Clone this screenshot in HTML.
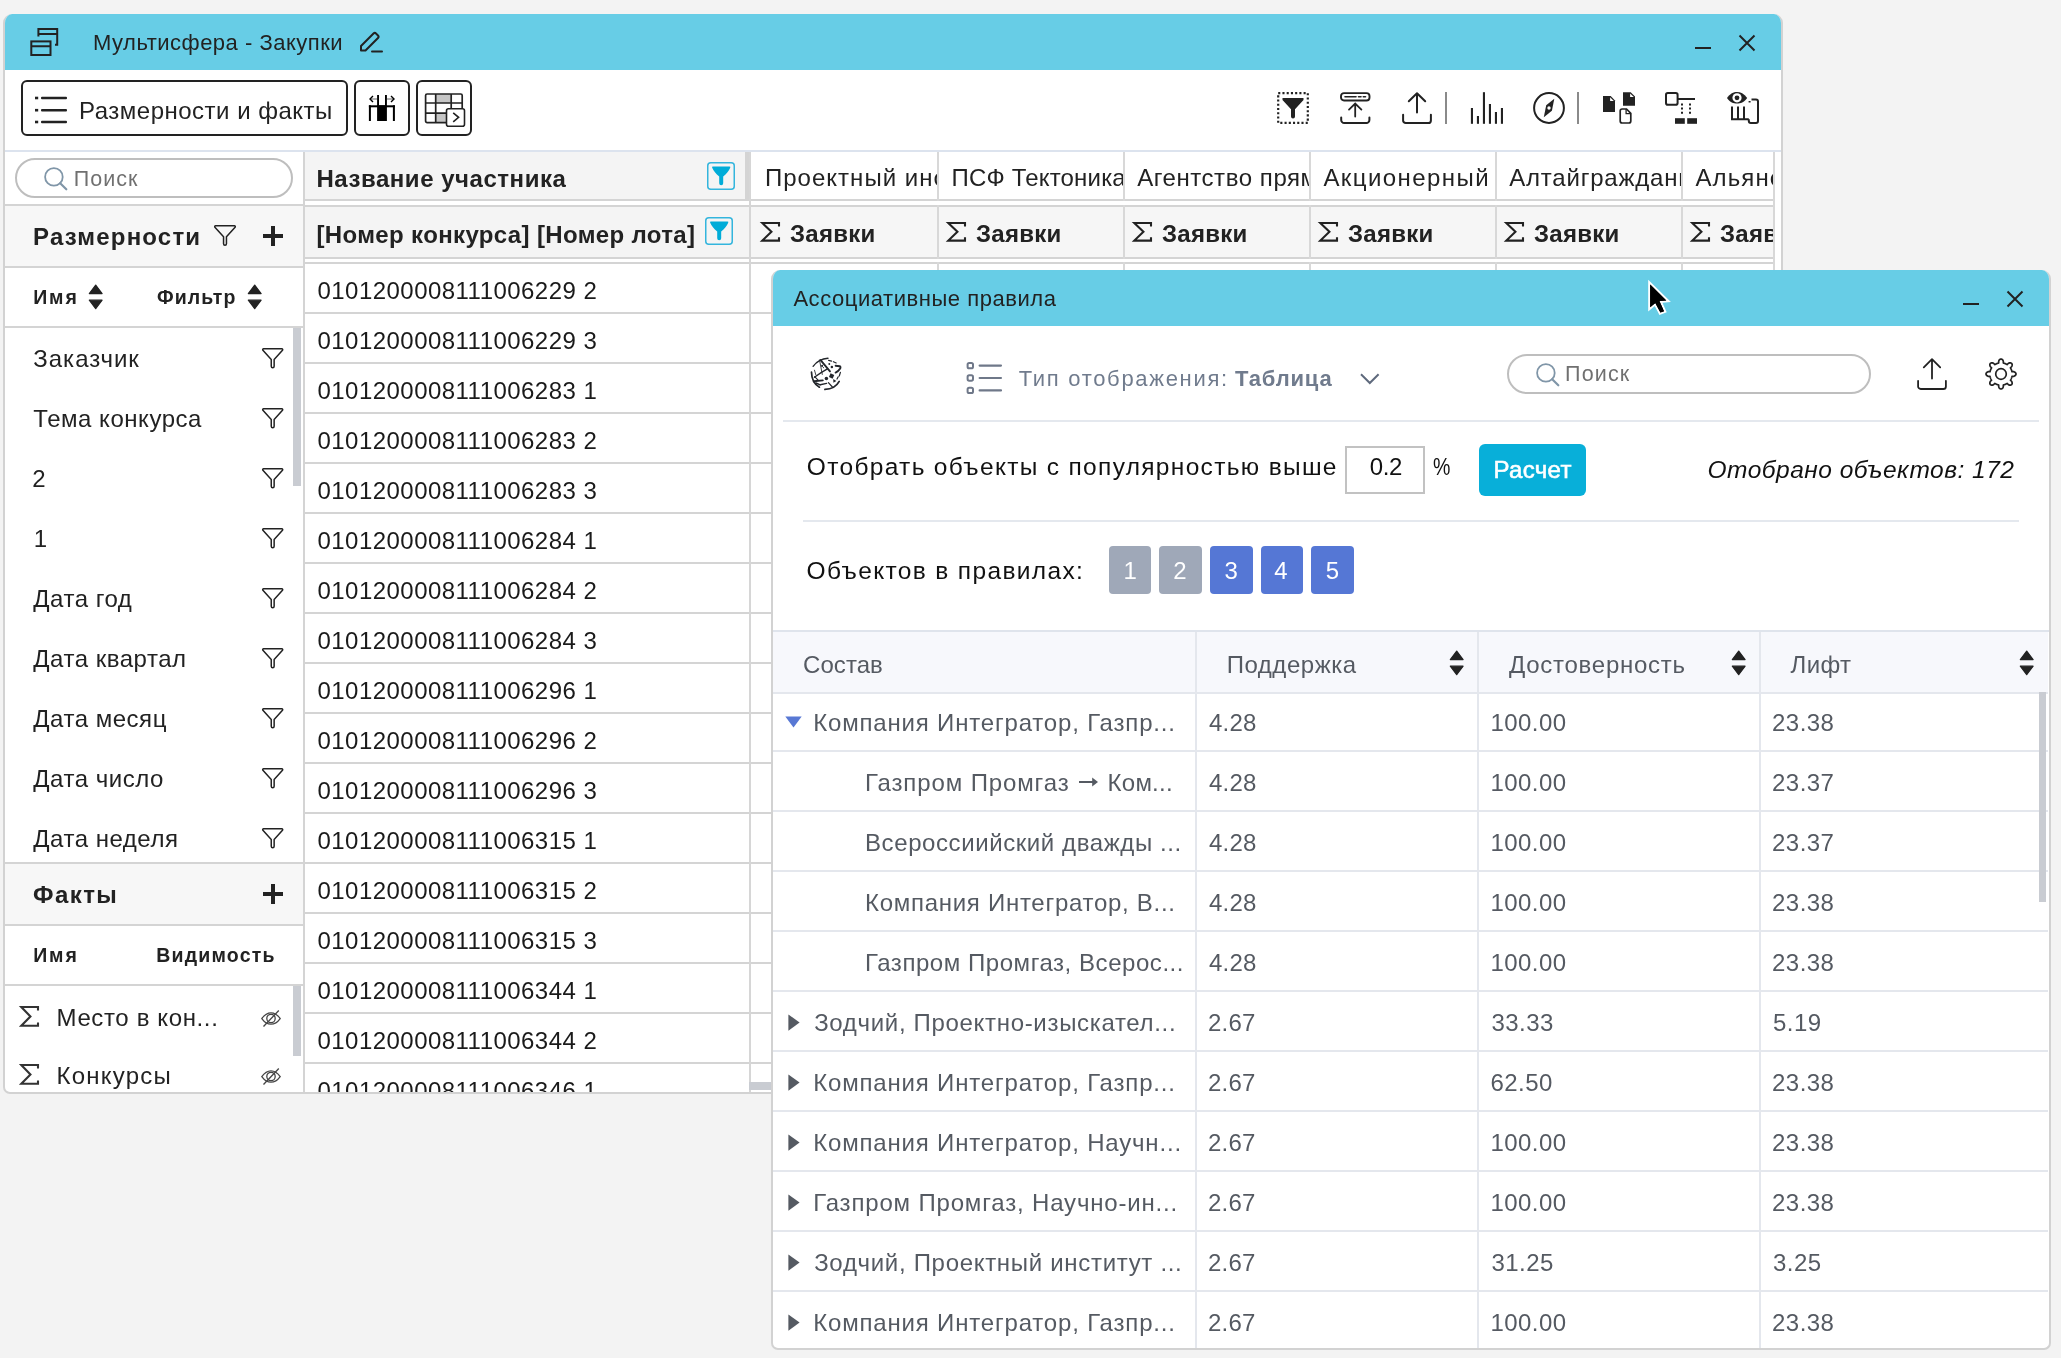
<!DOCTYPE html>
<html lang="ru"><head><meta charset="utf-8"><title>Мультисфера - Закупки</title>
<style>
html,body{margin:0;padding:0}
body{width:2061px;height:1358px;overflow:hidden;background:#f3f3f3;position:relative;font-family:"Liberation Sans", sans-serif;}
body div,body svg,body span.t{position:absolute;box-sizing:border-box}
span.t{white-space:nowrap;line-height:1;display:block}
svg{overflow:visible}
</style></head><body>
<div id="root" style="left:0;top:0;width:2061px;height:1358px;will-change:transform;overflow:hidden;background:#f3f3f3">
<div style="left:3px;top:14px;width:1780px;height:1080px;border:2px solid #d2d2d2;border-top:0;border-radius:9px 9px 7px 7px;overflow:hidden;background:#fff"><div style="left:-5px;top:-14px;width:0;height:0">
<div style="left:5px;top:14px;width:1776px;height:56px;background:#67cde6"></div>
<svg style="left:30px;top:27px;" width="29" height="30" viewBox="0 0 29 30"><g fill="none" stroke="#222" stroke-width="2"><path d="M8.4 9.5V1.9H27.2V17.8H25"/><path d="M8.4 7H27.2"/><rect x="1.3" y="14.4" width="19.2" height="13.6"/><path d="M1.3 19.2H20.5"/></g></svg>
<span class="t" style="left:93px;top:32.18px;font-size:22px;color:#222;letter-spacing:0.5px;">Мультисфера - Закупки</span>
<svg style="left:359px;top:31px;" width="24" height="22" viewBox="0 0 24 22"><g fill="none" stroke="#222" stroke-width="2" stroke-linejoin="round" stroke-linecap="round"><path d="M2 19.5V15L14.5 2.5a1.8 1.8 0 0 1 2.5 0l2 2a1.8 1.8 0 0 1 0 2.5L6.5 19.5Z"/><path d="M13 20.5H23"/></g></svg>
<div style="left:1695px;top:47px;width:16px;height:2px;background:#222"></div>
<svg style="left:1739px;top:34.5px;" width="16" height="16" viewBox="0 0 16 16"><path d="M0.5 0.5L15.5 15.5M15.5 0.5L0.5 15.5" stroke="#222" stroke-width="2" fill="none"/></svg>
<div style="left:21px;top:80px;width:327px;height:56px;border:2px solid #222;border-radius:6px"></div>
<svg style="left:35px;top:96px;" width="32" height="28" viewBox="0 0 32 28"><rect x="0" y="0.7" width="3.2" height="2.6" fill="#222"/><rect x="6" y="0.7" width="26" height="2.6" rx="1" fill="#222"/><rect x="0" y="12.899999999999999" width="3.2" height="2.6" fill="#222"/><rect x="6" y="12.899999999999999" width="26" height="2.6" rx="1" fill="#222"/><rect x="0" y="24.7" width="3.2" height="2.6" fill="#222"/><rect x="6" y="24.7" width="26" height="2.6" rx="1" fill="#222"/></svg>
<span class="t" style="left:79px;top:98.68px;font-size:24px;color:#222;letter-spacing:0.5px;">Размерности и факты</span>
<div style="left:354px;top:80px;width:56px;height:56px;border:2px solid #222;border-radius:6px"></div>
<svg style="left:368px;top:94px;" width="28" height="28" viewBox="0 0 28 28"><g fill="#000"><rect x="0.9" y="11.3" width="26" height="2"/><rect x="0.9" y="11.3" width="2" height="15.7"/><rect x="24.9" y="11.3" width="2" height="15.7"/><rect x="9.1" y="11.3" width="9.8" height="15.7"/><rect x="9.1" y="1" width="1.9" height="11"/><rect x="17" y="1" width="1.9" height="11"/></g><path d="M9 5H2.5" stroke="#999" stroke-width="1.6"/><path d="M19 5H25.5" stroke="#999" stroke-width="1.6"/><path d="M5 2L2 5L5 8M23 2L26 5L23 8" stroke="#000" stroke-width="1.4" fill="none"/></svg>
<div style="left:416px;top:80px;width:56px;height:56px;border:2px solid #222;border-radius:6px"></div>
<svg style="left:424px;top:93px;" width="42" height="34" viewBox="0 0 42 34"><rect x="11.7" y="1" width="15.5" height="9" fill="#c6c6c6"/><rect x="11.7" y="20.5" width="15.5" height="8.6" fill="#c6c6c6"/><g fill="none" stroke="#222" stroke-width="1.7"><rect x="1.6" y="1" width="36.6" height="28.6" rx="1.5"/><path d="M1.6 10H38.2M1.6 20.2H38.2M11.7 1V29.6M27.2 1V29.6"/></g><rect x="22.5" y="15.8" width="18" height="17.5" rx="2" fill="#fff" stroke="#222" stroke-width="1.6"/><path d="M29.2 19.8L34.6 24.3L29.2 28.8" fill="none" stroke="#222" stroke-width="1.6"/></svg>
<svg style="left:1277px;top:92px;" width="32" height="32" viewBox="0 0 32 32"><rect x="1.2" y="1.2" width="29.6" height="29.6" fill="none" stroke="#222" stroke-width="2.2" stroke-dasharray="2.1 2.13"/><path d="M5.5 6H26.5V8L18 17.2V24.6a2 2 0 0 1-4 0V17.2L5.5 8Z" fill="#222"/></svg>
<svg style="left:1340px;top:92px;" width="31" height="32" viewBox="0 0 31 32"><g fill="none" stroke="#222" stroke-linecap="round"><rect x="1" y="1.1" width="28.5" height="7.4" rx="3" stroke-width="1.9"/><path d="M5 4.8H16" stroke-width="1.6"/><path d="M18.5 4.8H21M23.3 4.8H25.5" stroke-width="1.6"/><path d="M15.2 12V24.5M9 17.6L15.2 11.6L21.4 17.6" stroke-width="1.8"/><path d="M1.2 25.5V28a3 3 0 0 0 3 3H26.4a3 3 0 0 0 3-3V25.5" stroke-width="2"/></g></svg>
<svg style="left:1402px;top:92px;" width="30" height="32" viewBox="0 0 30 32"><g fill="none" stroke="#222" stroke-width="2" stroke-linecap="round" stroke-linejoin="round"><path d="M15.0 1.2V20.5M6.800000000000001 9.3L15.0 1.2L23.2 9.3"/><path d="M1.1 22.8V28.4a2.6 2.6 0 0 0 2.6 2.6H26.3a2.6 2.6 0 0 0 2.6-2.6V22.8"/></g></svg>
<div style="left:1445px;top:92px;width:2px;height:32px;background:#8a8a8a"></div>
<svg style="left:1470px;top:92px;" width="33" height="32" viewBox="0 0 33 32"><rect x="0.9" y="16" width="2.1" height="15.8" fill="#222"/><rect x="6.9" y="24" width="2.1" height="7.800000000000001" fill="#222"/><rect x="12.9" y="0.2" width="2.1" height="31.6" fill="#222"/><rect x="18.9" y="12" width="2.1" height="19.8" fill="#222"/><rect x="24.9" y="20" width="2.1" height="11.8" fill="#222"/><rect x="30.9" y="16" width="2.1" height="15.8" fill="#222"/></svg>
<svg style="left:1533px;top:92px;" width="32" height="32" viewBox="0 0 32 32"><circle cx="16" cy="16" r="14.9" fill="none" stroke="#222" stroke-width="2"/><path d="M21.3 6.8L18.9 18.7L10.8 25.2L13.2 13.3Z" fill="#222"/><circle cx="16" cy="16" r="1.7" fill="#fff"/></svg>
<div style="left:1577px;top:92px;width:2px;height:32px;background:#8a8a8a"></div>
<svg style="left:1603px;top:92px;" width="33" height="33" viewBox="0 0 33 33"><path d="M0 4.1H7.7L12 8.399999999999999V19.9H0Z" fill="#222"/><path d="M7.1000000000000005 5.3V8.999999999999998H10.8" fill="#fff" stroke="none"/><path d="M20 0.2H27.7L32 4.5V13.799999999999999H20Z" fill="#222"/><path d="M27.099999999999998 1.4V5.1H30.8" fill="#fff" stroke="none"/><path d="M19.2 17H23.499999999999996L27.799999999999997 21.3V29a2 2 0 0 1-2 2H19.2a2 2 0 0 1-2-2V19a2 2 0 0 1 2-2Z" fill="#fff" stroke="#222" stroke-width="1.7"/><path d="M23.099999999999998 17V21.7H27.799999999999997" fill="none" stroke="#222" stroke-width="1.3"/></svg>
<svg style="left:1665px;top:92px;" width="33" height="32" viewBox="0 0 33 32"><rect x="1" y="1.1" width="11.6" height="11.6" rx="1.8" fill="none" stroke="#222" stroke-width="2"/><path d="M13 7H30" stroke="#222" stroke-width="2"/><path d="M17 11.4V22M25 11.4V22" stroke="#222" stroke-width="2" stroke-dasharray="2 2.2"/><rect x="10" y="26.2" width="9.8" height="5.6" fill="#222"/><rect x="22.2" y="26.2" width="9.8" height="5.6" fill="#222"/></svg>
<svg style="left:1727px;top:92px;" width="33" height="32" viewBox="0 0 33 32"><path d="M0 6C3 1.6 6.5 0 10 0S17 1.6 20.2 6C17 10.4 13.5 11.6 10 11.6S3 10.4 0 6Z" fill="#222"/><circle cx="10" cy="5.8" r="4.6" fill="#fff"/><circle cx="10" cy="5.8" r="2.4" fill="#222"/><g fill="none" stroke="#222" stroke-width="2"><path d="M5 14.4V27.2H21.8M11 14.4V27.2M17 14.4V27.2"/><path d="M21.8 27.2V29a2 2 0 0 0 2 2H29a2 2 0 0 0 2-2V9.6a2 2 0 0 0-2-2H24.5"/><path d="M22.6 9V11" stroke-dasharray="1.5 1.5"/></g></svg>
<div style="left:5px;top:150px;width:1776px;height:2px;background:#dce3ee"></div>
<div style="left:15px;top:158px;width:278px;height:40px;border:2px solid #bebebe;border-radius:20px"></div>
<svg style="left:44px;top:166.5px;" width="23" height="23" viewBox="0 0 23 23"><circle cx="9.9" cy="9.9" r="8.8" fill="none" stroke="#8096a8" stroke-width="1.8"/><path d="M16.2 16.2L22.3 22.3" stroke="#8096a8" stroke-width="2.2" stroke-linecap="round"/></svg>
<span class="t" style="left:73.8px;top:168.70px;font-size:21.5px;color:#707070;letter-spacing:0.98px;">Поиск</span>
<div style="left:5px;top:204px;width:299px;height:2px;background:#d4d4d4"></div>
<div style="left:5px;top:206px;width:299px;height:60px;background:#f7f7f7"></div>
<span class="t" style="left:33px;top:224.68px;font-size:24px;color:#222;font-weight:700;letter-spacing:1.2px;">Размерности</span>
<svg style="left:213.5px;top:225px;" width="22" height="21" viewBox="0 0 22 21"><path d="M1.6 0.8H20.4a0.9 0.9 0 0 1 .7 1.5L12.45 11.760000000000002V18.8a1.45 1.45 0 0 1-2.9 0V11.760000000000002L0.9 2.3a0.9 0.9 0 0 1 .7-1.5Z" fill="none" stroke="#222" stroke-width="1.5" stroke-linejoin="round"/></svg>
<svg style="left:263px;top:226.1px;" width="20" height="20" viewBox="0 0 20 20"><rect x="0" y="8.0" width="20" height="4" fill="#222"/><rect x="8.0" y="0" width="4" height="20" fill="#222"/></svg>
<div style="left:5px;top:266px;width:299px;height:2px;background:#d4d4d4"></div>
<span class="t" style="left:33.2px;top:288.29px;font-size:19.5px;color:#222;font-weight:700;letter-spacing:1.88px;">Имя</span>
<svg style="left:88px;top:283.9px;" width="16" height="26" viewBox="0 0 16 26"><g fill="#222" stroke="#222" stroke-width="1.2" stroke-linejoin="round"><path d="M1.3 9.6L7.7 1.1L14.1 9.6Z"/><path d="M1.3 16.2L7.7 24.7L14.1 16.2Z"/></g></svg>
<span class="t" style="left:157.0px;top:288.29px;font-size:19.5px;color:#222;font-weight:700;letter-spacing:1.11px;">Фильтр</span>
<svg style="left:247px;top:283.9px;" width="16" height="26" viewBox="0 0 16 26"><g fill="#222" stroke="#222" stroke-width="1.2" stroke-linejoin="round"><path d="M1.3 9.6L7.7 1.1L14.1 9.6Z"/><path d="M1.3 16.2L7.7 24.7L14.1 16.2Z"/></g></svg>
<div style="left:5px;top:326px;width:299px;height:2px;background:#d4d4d4"></div>
<span class="t" style="left:33.3px;top:346.68px;font-size:24px;color:#222;letter-spacing:0.99px;">Заказчик</span>
<svg style="left:262.2px;top:347.6px;" width="21.4" height="20.4" viewBox="0 0 21.4 20.4"><path d="M1.6 0.8H19.799999999999997a0.9 0.9 0 0 1 .7 1.5L12.149999999999999 11.424V18.2a1.45 1.45 0 0 1-2.9 0V11.424L0.9 2.3a0.9 0.9 0 0 1 .7-1.5Z" fill="none" stroke="#222" stroke-width="1.5" stroke-linejoin="round"/></svg>
<span class="t" style="left:33.3px;top:406.68px;font-size:24px;color:#222;letter-spacing:0.53px;">Тема конкурса</span>
<svg style="left:262.2px;top:407.6px;" width="21.4" height="20.4" viewBox="0 0 21.4 20.4"><path d="M1.6 0.8H19.799999999999997a0.9 0.9 0 0 1 .7 1.5L12.149999999999999 11.424V18.2a1.45 1.45 0 0 1-2.9 0V11.424L0.9 2.3a0.9 0.9 0 0 1 .7-1.5Z" fill="none" stroke="#222" stroke-width="1.5" stroke-linejoin="round"/></svg>
<span class="t" style="left:32.3px;top:466.68px;font-size:24px;color:#222;letter-spacing:0.52px;">2</span>
<svg style="left:262.2px;top:467.6px;" width="21.4" height="20.4" viewBox="0 0 21.4 20.4"><path d="M1.6 0.8H19.799999999999997a0.9 0.9 0 0 1 .7 1.5L12.149999999999999 11.424V18.2a1.45 1.45 0 0 1-2.9 0V11.424L0.9 2.3a0.9 0.9 0 0 1 .7-1.5Z" fill="none" stroke="#222" stroke-width="1.5" stroke-linejoin="round"/></svg>
<span class="t" style="left:33.8px;top:526.68px;font-size:24px;color:#222;letter-spacing:0.52px;">1</span>
<svg style="left:262.2px;top:527.6px;" width="21.4" height="20.4" viewBox="0 0 21.4 20.4"><path d="M1.6 0.8H19.799999999999997a0.9 0.9 0 0 1 .7 1.5L12.149999999999999 11.424V18.2a1.45 1.45 0 0 1-2.9 0V11.424L0.9 2.3a0.9 0.9 0 0 1 .7-1.5Z" fill="none" stroke="#222" stroke-width="1.5" stroke-linejoin="round"/></svg>
<span class="t" style="left:33.3px;top:586.68px;font-size:24px;color:#222;letter-spacing:0.52px;">Дата год</span>
<svg style="left:262.2px;top:587.6px;" width="21.4" height="20.4" viewBox="0 0 21.4 20.4"><path d="M1.6 0.8H19.799999999999997a0.9 0.9 0 0 1 .7 1.5L12.149999999999999 11.424V18.2a1.45 1.45 0 0 1-2.9 0V11.424L0.9 2.3a0.9 0.9 0 0 1 .7-1.5Z" fill="none" stroke="#222" stroke-width="1.5" stroke-linejoin="round"/></svg>
<span class="t" style="left:33.3px;top:646.68px;font-size:24px;color:#222;letter-spacing:0.52px;">Дата квартал</span>
<svg style="left:262.2px;top:647.6px;" width="21.4" height="20.4" viewBox="0 0 21.4 20.4"><path d="M1.6 0.8H19.799999999999997a0.9 0.9 0 0 1 .7 1.5L12.149999999999999 11.424V18.2a1.45 1.45 0 0 1-2.9 0V11.424L0.9 2.3a0.9 0.9 0 0 1 .7-1.5Z" fill="none" stroke="#222" stroke-width="1.5" stroke-linejoin="round"/></svg>
<span class="t" style="left:33.3px;top:706.68px;font-size:24px;color:#222;letter-spacing:0.52px;">Дата месяц</span>
<svg style="left:262.2px;top:707.6px;" width="21.4" height="20.4" viewBox="0 0 21.4 20.4"><path d="M1.6 0.8H19.799999999999997a0.9 0.9 0 0 1 .7 1.5L12.149999999999999 11.424V18.2a1.45 1.45 0 0 1-2.9 0V11.424L0.9 2.3a0.9 0.9 0 0 1 .7-1.5Z" fill="none" stroke="#222" stroke-width="1.5" stroke-linejoin="round"/></svg>
<span class="t" style="left:33.3px;top:766.68px;font-size:24px;color:#222;letter-spacing:0.52px;">Дата число</span>
<svg style="left:262.2px;top:767.6px;" width="21.4" height="20.4" viewBox="0 0 21.4 20.4"><path d="M1.6 0.8H19.799999999999997a0.9 0.9 0 0 1 .7 1.5L12.149999999999999 11.424V18.2a1.45 1.45 0 0 1-2.9 0V11.424L0.9 2.3a0.9 0.9 0 0 1 .7-1.5Z" fill="none" stroke="#222" stroke-width="1.5" stroke-linejoin="round"/></svg>
<span class="t" style="left:33.3px;top:826.68px;font-size:24px;color:#222;letter-spacing:0.52px;">Дата неделя</span>
<svg style="left:262.2px;top:827.6px;" width="21.4" height="20.4" viewBox="0 0 21.4 20.4"><path d="M1.6 0.8H19.799999999999997a0.9 0.9 0 0 1 .7 1.5L12.149999999999999 11.424V18.2a1.45 1.45 0 0 1-2.9 0V11.424L0.9 2.3a0.9 0.9 0 0 1 .7-1.5Z" fill="none" stroke="#222" stroke-width="1.5" stroke-linejoin="round"/></svg>
<div style="left:293px;top:328px;width:8px;height:158px;background:#c9ccd2"></div>
<div style="left:5px;top:862px;width:299px;height:2px;background:#d4d4d4"></div>
<div style="left:5px;top:864px;width:299px;height:60px;background:#f7f7f7"></div>
<span class="t" style="left:33.0px;top:882.68px;font-size:24px;color:#222;font-weight:700;letter-spacing:1.43px;">Факты</span>
<svg style="left:263.3px;top:884.3px;" width="20" height="20" viewBox="0 0 20 20"><rect x="0" y="8.0" width="20" height="4" fill="#222"/><rect x="8.0" y="0" width="4" height="20" fill="#222"/></svg>
<div style="left:5px;top:924px;width:299px;height:2px;background:#d4d4d4"></div>
<span class="t" style="left:33.2px;top:946.49px;font-size:19.5px;color:#222;font-weight:700;letter-spacing:1.88px;">Имя</span>
<span class="t" style="left:156.2px;top:946.49px;font-size:19.5px;color:#222;font-weight:700;letter-spacing:1.21px;">Видимость</span>
<div style="left:5px;top:984px;width:299px;height:2px;background:#d4d4d4"></div>
<svg style="left:20.3px;top:1005.5px;" width="19" height="20.8" viewBox="0 0 19 20.8"><path d="M18 4.4V1H1.3L10.450000000000001 10.4L1.3 19.8H18V16.4" fill="none" stroke="#333" stroke-width="2.1" stroke-linejoin="miter"/></svg>
<span class="t" style="left:56.5px;top:1005.98px;font-size:24px;color:#222;letter-spacing:0.63px;">Место в кон...</span>
<svg style="left:261px;top:1009.2px;" width="20" height="18" viewBox="0 0 20 18"><g fill="none" stroke="#444" stroke-width="1.3"><path d="M0.8 9.6C4 5 7 3.8 10 3.8S16 5 19.2 9.6C16 14 13 15.2 10 15.2S4 14 0.8 9.6Z"/><circle cx="10" cy="9.5" r="4.2"/><path d="M2.5 17.5L17.8 1.5"/></g></svg>
<svg style="left:20.3px;top:1063.5px;" width="19" height="20.8" viewBox="0 0 19 20.8"><path d="M18 4.4V1H1.3L10.450000000000001 10.4L1.3 19.8H18V16.4" fill="none" stroke="#333" stroke-width="2.1" stroke-linejoin="miter"/></svg>
<span class="t" style="left:56.5px;top:1064.18px;font-size:24px;color:#222;letter-spacing:1.24px;">Конкурсы</span>
<svg style="left:261px;top:1067.2px;" width="20" height="18" viewBox="0 0 20 18"><g fill="none" stroke="#444" stroke-width="1.3"><path d="M0.8 9.6C4 5 7 3.8 10 3.8S16 5 19.2 9.6C16 14 13 15.2 10 15.2S4 14 0.8 9.6Z"/><circle cx="10" cy="9.5" r="4.2"/><path d="M2.5 17.5L17.8 1.5"/></g></svg>
<div style="left:293px;top:986px;width:8px;height:70px;background:#c9ccd2"></div>
<div style="left:303px;top:152px;width:2px;height:940px;background:#d4d4d4"></div>
<div style="left:305px;top:152px;width:444px;height:47px;background:#f4f4f4"></div>
<div style="left:305px;top:207px;width:444px;height:50px;background:#f4f4f4"></div>
<div style="left:751px;top:207px;width:1022px;height:50px;background:#f6f6f6"></div>
<div style="left:305px;top:199px;width:1470px;height:2px;background:#d4d4d4"></div>
<div style="left:305px;top:205px;width:1470px;height:2px;background:#d4d4d4"></div>
<div style="left:305px;top:257px;width:1470px;height:2px;background:#d4d4d4"></div>
<span class="t" style="left:316.5px;top:167.18px;font-size:24px;color:#222;font-weight:700;letter-spacing:0.53px;">Название участника</span>
<span class="t" style="left:316.5px;top:222.68px;font-size:24px;color:#222;font-weight:700;letter-spacing:0.36px;">[Номер конкурса] [Номер лота]</span>
<svg style="left:707px;top:162px;" width="28" height="28" viewBox="0 0 28 28"><rect x="0.75" y="0.75" width="26.5" height="26.5" rx="3" fill="none" stroke="#33b5dd" stroke-width="1.5"/><path d="M6 4.4H22.4a.9.9 0 0 1 .8 1.3C22 9 19.5 11.5 16.2 14.6V21.3a2 2 0 0 1-4 0V14.6C9 11.5 6.4 9 5.2 5.7a.9.9 0 0 1 .8-1.3Z" fill="#00acd8"/></svg>
<svg style="left:705px;top:217px;" width="28" height="28" viewBox="0 0 28 28"><rect x="0.75" y="0.75" width="26.5" height="26.5" rx="3" fill="none" stroke="#33b5dd" stroke-width="1.5"/><path d="M6 4.4H22.4a.9.9 0 0 1 .8 1.3C22 9 19.5 11.5 16.2 14.6V21.3a2 2 0 0 1-4 0V14.6C9 11.5 6.4 9 5.2 5.7a.9.9 0 0 1 .8-1.3Z" fill="#00acd8"/></svg>
<div style="left:745px;top:152px;width:4px;height:47px;background:#d4d4d4"></div>
<div style="left:753px;top:165.98px;width:184px;height:31.2px;overflow:hidden"><span class="t" style="left:12px;top:0;font-size:24px;color:#222;letter-spacing:1.01px;">Проектный институт</span></div>
<svg style="left:761px;top:222.20000000000002px;" width="19" height="19.6" viewBox="0 0 19 19.6"><path d="M18 4.4V1H1.3L10.450000000000001 9.8L1.3 18.6H18V15.200000000000001" fill="none" stroke="#222" stroke-width="2.1" stroke-linejoin="miter"/></svg>
<div style="left:751px;top:221.68px;width:186px;height:31.2px;overflow:hidden"><span class="t" style="left:39.10000000000002px;top:0;font-size:24px;color:#222;font-weight:700;letter-spacing:0.23px;">Заявки</span></div>
<div style="left:939px;top:165.98px;width:184px;height:31.2px;overflow:hidden"><span class="t" style="left:12.5px;top:0;font-size:24px;color:#222;letter-spacing:0.18px;">ПСФ Тектоника</span></div>
<svg style="left:947px;top:222.20000000000002px;" width="19" height="19.6" viewBox="0 0 19 19.6"><path d="M18 4.4V1H1.3L10.450000000000001 9.8L1.3 18.6H18V15.200000000000001" fill="none" stroke="#222" stroke-width="2.1" stroke-linejoin="miter"/></svg>
<div style="left:937px;top:221.68px;width:186px;height:31.2px;overflow:hidden"><span class="t" style="left:39.10000000000002px;top:0;font-size:24px;color:#222;font-weight:700;letter-spacing:0.23px;">Заявки</span></div>
<div style="left:1125px;top:165.98px;width:184px;height:31.2px;overflow:hidden"><span class="t" style="left:12.200000000000045px;top:0;font-size:24px;color:#222;letter-spacing:0.56px;">Агентство прямых</span></div>
<svg style="left:1133px;top:222.20000000000002px;" width="19" height="19.6" viewBox="0 0 19 19.6"><path d="M18 4.4V1H1.3L10.450000000000001 9.8L1.3 18.6H18V15.200000000000001" fill="none" stroke="#222" stroke-width="2.1" stroke-linejoin="miter"/></svg>
<div style="left:1123px;top:221.68px;width:186px;height:31.2px;overflow:hidden"><span class="t" style="left:39.09999999999991px;top:0;font-size:24px;color:#222;font-weight:700;letter-spacing:0.23px;">Заявки</span></div>
<div style="left:1311px;top:165.98px;width:184px;height:31.2px;overflow:hidden"><span class="t" style="left:12.400000000000091px;top:0;font-size:24px;color:#222;letter-spacing:1.43px;">Акционерный</span></div>
<svg style="left:1319px;top:222.20000000000002px;" width="19" height="19.6" viewBox="0 0 19 19.6"><path d="M18 4.4V1H1.3L10.450000000000001 9.8L1.3 18.6H18V15.200000000000001" fill="none" stroke="#222" stroke-width="2.1" stroke-linejoin="miter"/></svg>
<div style="left:1309px;top:221.68px;width:186px;height:31.2px;overflow:hidden"><span class="t" style="left:39.09999999999991px;top:0;font-size:24px;color:#222;font-weight:700;letter-spacing:0.23px;">Заявки</span></div>
<div style="left:1497px;top:165.98px;width:184px;height:31.2px;overflow:hidden"><span class="t" style="left:12.200000000000045px;top:0;font-size:24px;color:#222;letter-spacing:0.79px;">Алтайгражданпроект</span></div>
<svg style="left:1505px;top:222.20000000000002px;" width="19" height="19.6" viewBox="0 0 19 19.6"><path d="M18 4.4V1H1.3L10.450000000000001 9.8L1.3 18.6H18V15.200000000000001" fill="none" stroke="#222" stroke-width="2.1" stroke-linejoin="miter"/></svg>
<div style="left:1495px;top:221.68px;width:186px;height:31.2px;overflow:hidden"><span class="t" style="left:39.09999999999991px;top:0;font-size:24px;color:#222;font-weight:700;letter-spacing:0.23px;">Заявки</span></div>
<div style="left:1683px;top:165.98px;width:90px;height:31.2px;overflow:hidden"><span class="t" style="left:12.400000000000091px;top:0;font-size:24px;color:#222;letter-spacing:1.12px;">Альянс</span></div>
<svg style="left:1691px;top:222.20000000000002px;" width="19" height="19.6" viewBox="0 0 19 19.6"><path d="M18 4.4V1H1.3L10.450000000000001 9.8L1.3 18.6H18V15.200000000000001" fill="none" stroke="#222" stroke-width="2.1" stroke-linejoin="miter"/></svg>
<div style="left:1681px;top:221.68px;width:92px;height:31.2px;overflow:hidden"><span class="t" style="left:39.09999999999991px;top:0;font-size:24px;color:#222;font-weight:700;letter-spacing:0.23px;">Заявки</span></div>
<div style="left:305px;top:262px;width:1470px;height:2px;background:#d4d4d4"></div>
<span class="t" style="left:317.5px;top:278.88px;font-size:24px;color:#1a1a1a;letter-spacing:0.46px;">0101200008111006229 2</span>
<div style="left:305px;top:312px;width:1470px;height:2px;background:#d4d4d4"></div>
<span class="t" style="left:317.5px;top:328.88px;font-size:24px;color:#1a1a1a;letter-spacing:0.46px;">0101200008111006229 3</span>
<div style="left:305px;top:362px;width:1470px;height:2px;background:#d4d4d4"></div>
<span class="t" style="left:317.5px;top:378.88px;font-size:24px;color:#1a1a1a;letter-spacing:0.46px;">0101200008111006283 1</span>
<div style="left:305px;top:412px;width:1470px;height:2px;background:#d4d4d4"></div>
<span class="t" style="left:317.5px;top:428.88px;font-size:24px;color:#1a1a1a;letter-spacing:0.46px;">0101200008111006283 2</span>
<div style="left:305px;top:462px;width:1470px;height:2px;background:#d4d4d4"></div>
<span class="t" style="left:317.5px;top:478.88px;font-size:24px;color:#1a1a1a;letter-spacing:0.46px;">0101200008111006283 3</span>
<div style="left:305px;top:512px;width:1470px;height:2px;background:#d4d4d4"></div>
<span class="t" style="left:317.5px;top:528.88px;font-size:24px;color:#1a1a1a;letter-spacing:0.46px;">0101200008111006284 1</span>
<div style="left:305px;top:562px;width:1470px;height:2px;background:#d4d4d4"></div>
<span class="t" style="left:317.5px;top:578.88px;font-size:24px;color:#1a1a1a;letter-spacing:0.46px;">0101200008111006284 2</span>
<div style="left:305px;top:612px;width:1470px;height:2px;background:#d4d4d4"></div>
<span class="t" style="left:317.5px;top:628.88px;font-size:24px;color:#1a1a1a;letter-spacing:0.46px;">0101200008111006284 3</span>
<div style="left:305px;top:662px;width:1470px;height:2px;background:#d4d4d4"></div>
<span class="t" style="left:317.5px;top:678.88px;font-size:24px;color:#1a1a1a;letter-spacing:0.46px;">0101200008111006296 1</span>
<div style="left:305px;top:712px;width:1470px;height:2px;background:#d4d4d4"></div>
<span class="t" style="left:317.5px;top:728.88px;font-size:24px;color:#1a1a1a;letter-spacing:0.46px;">0101200008111006296 2</span>
<div style="left:305px;top:762px;width:1470px;height:2px;background:#d4d4d4"></div>
<span class="t" style="left:317.5px;top:778.88px;font-size:24px;color:#1a1a1a;letter-spacing:0.46px;">0101200008111006296 3</span>
<div style="left:305px;top:812px;width:1470px;height:2px;background:#d4d4d4"></div>
<span class="t" style="left:317.5px;top:828.88px;font-size:24px;color:#1a1a1a;letter-spacing:0.46px;">0101200008111006315 1</span>
<div style="left:305px;top:862px;width:1470px;height:2px;background:#d4d4d4"></div>
<span class="t" style="left:317.5px;top:878.88px;font-size:24px;color:#1a1a1a;letter-spacing:0.46px;">0101200008111006315 2</span>
<div style="left:305px;top:912px;width:1470px;height:2px;background:#d4d4d4"></div>
<span class="t" style="left:317.5px;top:928.88px;font-size:24px;color:#1a1a1a;letter-spacing:0.46px;">0101200008111006315 3</span>
<div style="left:305px;top:962px;width:1470px;height:2px;background:#d4d4d4"></div>
<span class="t" style="left:317.5px;top:978.88px;font-size:24px;color:#1a1a1a;letter-spacing:0.46px;">0101200008111006344 1</span>
<div style="left:305px;top:1012px;width:1470px;height:2px;background:#d4d4d4"></div>
<span class="t" style="left:317.5px;top:1028.88px;font-size:24px;color:#1a1a1a;letter-spacing:0.46px;">0101200008111006344 2</span>
<div style="left:305px;top:1062px;width:1470px;height:2px;background:#d4d4d4"></div>
<span class="t" style="left:317.5px;top:1078.88px;font-size:24px;color:#1a1a1a;letter-spacing:0.46px;">0101200008111006346 1</span>
<div style="left:749px;top:152px;width:2px;height:940px;background:#d6d6d6"></div>
<div style="left:937px;top:152px;width:2px;height:940px;background:#d8d8d8"></div>
<div style="left:1123px;top:152px;width:2px;height:940px;background:#d8d8d8"></div>
<div style="left:1309px;top:152px;width:2px;height:940px;background:#d8d8d8"></div>
<div style="left:1495px;top:152px;width:2px;height:940px;background:#d8d8d8"></div>
<div style="left:1681px;top:152px;width:2px;height:940px;background:#d8d8d8"></div>
<div style="left:1773px;top:152px;width:2px;height:940px;background:#d8d8d8"></div>
<div style="left:751px;top:201px;width:1022px;height:4px;background:#fff"></div>
<div style="left:751px;top:259px;width:1022px;height:3px;background:#fff"></div>
<div style="left:749px;top:1082px;width:300px;height:8px;background:#c9ccd2"></div>
</div></div>
<div style="left:771px;top:270px;width:1280px;height:1080px;border:2px solid #d2d2d2;border-top:0;border-radius:9px 9px 7px 7px;overflow:hidden;background:#fff"><div style="left:-773px;top:-270px;width:0;height:0">
<div style="left:773px;top:270px;width:1276px;height:56px;background:#67cde6"></div>
<span class="t" style="left:793.4px;top:287.98px;font-size:22px;color:#222;letter-spacing:0.55px;">Ассоциативные правила</span>
<div style="left:1963px;top:303px;width:16px;height:2px;background:#222"></div>
<svg style="left:2007px;top:290.5px;" width="16" height="16" viewBox="0 0 16 16"><path d="M0.5 0.5L15.5 15.5M15.5 0.5L0.5 15.5" stroke="#222" stroke-width="2" fill="none"/></svg>
<svg style="left:810px;top:358px;" width="32" height="32" viewBox="0 0 32 32"><g fill="none" stroke="#23262b" stroke-linecap="round"><path d="M3.1 8.3C6.5 3.6 11.5 0.6 18 0.2" stroke-width="1.37"/><path d="M18.6 2.4L21.6 3.1M23.4 3.7L26.2 5" stroke-width="1.15"/><path d="M25.6 7.7L29.6 8.2Q31 8.8 30.2 10.6Q28.6 13.2 25.6 14.6" stroke-width="1.87"/><path d="M30.4 14.3L29.3 18M28.2 18.8L27 21" stroke-width="1.22"/><path d="M14.9 31.4C21.5 31.2 26.5 28.4 29.2 23.4" stroke-width="1.73"/><path d="M1.5 14.2C1.6 21 4.6 26.4 9.4 29.2" stroke-width="1.73"/><path d="M9.5 1.9L12.3 16.4" stroke-width="0.86"/><path d="M10.6 2.1L20 13.4" stroke-width="1.87"/><path d="M4.4 19.3C8 16.6 12.5 13.4 17.4 10.8" stroke-width="1.37"/><path d="M4.5 12.2L5.8 16.8" stroke-width="0.86"/><path d="M4.7 18.6L8.3 22.4" stroke-width="1.15"/><path d="M3.8 23.2L12.8 22.4" stroke-width="1.87"/><path d="M10.2 26.8L16.6 25.4" stroke-width="1.44"/><path d="M6 25L10.2 26.8" stroke-width="1.44"/><path d="M18.4 24.6L22.4 29" stroke-width="1.22"/></g><g fill="#23262b"><circle cx="16.4" cy="20.6" r="1.75"/><rect x="19.6" y="16" width="4" height="4" transform="rotate(24 21.6 18)"/><circle cx="12.1" cy="7.9" r="1.05"/><circle cx="13.4" cy="9.6" r=".6"/><circle cx="19.3" cy="6" r=".95"/><circle cx="21.9" cy="8.9" r="1.25"/><path d="M23.2 21L26.4 22.9L23.4 24.8Z"/></g></svg>
<svg style="left:966px;top:362px;" width="36" height="32" viewBox="0 0 36 32"><rect x="1.6" y="0.8999999999999999" width="5.4" height="5.4" rx="1.6" fill="none" stroke="#6f7889" stroke-width="2"/><path d="M13.6 3.6H35" stroke="#6f7889" stroke-width="2.1" stroke-linecap="round"/><rect x="1.6" y="13.3" width="5.4" height="5.4" rx="1.6" fill="none" stroke="#6f7889" stroke-width="2"/><path d="M13.6 16H35" stroke="#6f7889" stroke-width="2.1" stroke-linecap="round"/><rect x="1.6" y="25.7" width="5.4" height="5.4" rx="1.6" fill="none" stroke="#6f7889" stroke-width="2"/><path d="M13.6 28.4H35" stroke="#6f7889" stroke-width="2.1" stroke-linecap="round"/></svg>
<span class="t" style="left:1018.7px;top:368.08px;font-size:22px;color:#707b8d;letter-spacing:1.69px;">Тип отображения:</span>
<span class="t" style="left:1235.0px;top:368.08px;font-size:22px;color:#707b8d;font-weight:700;letter-spacing:0.84px;">Таблица</span>
<svg style="left:1360px;top:373.3px;" width="20" height="12" viewBox="0 0 20 12"><path d="M1 1.2L9.8 10L18.6 1.2" fill="none" stroke="#5f6a7d" stroke-width="2"/></svg>
<div style="left:1507px;top:354px;width:364px;height:40px;border:2px solid #bebebe;border-radius:20px"></div>
<svg style="left:1536px;top:363px;" width="23" height="23" viewBox="0 0 23 23"><circle cx="9.9" cy="9.9" r="8.8" fill="none" stroke="#8096a8" stroke-width="1.8"/><path d="M16.2 16.2L22.3 22.3" stroke="#8096a8" stroke-width="2.2" stroke-linecap="round"/></svg>
<span class="t" style="left:1565.1px;top:364.40px;font-size:21.5px;color:#707070;letter-spacing:1.13px;">Поиск</span>
<svg style="left:1917px;top:358px;" width="30" height="32" viewBox="0 0 30 32"><g fill="none" stroke="#222" stroke-width="1.8" stroke-linecap="round" stroke-linejoin="round"><path d="M15.0 1.2V20.5M6.800000000000001 9.3L15.0 1.2L23.2 9.3"/><path d="M1.1 22.8V28.4a2.6 2.6 0 0 0 2.6 2.6H26.3a2.6 2.6 0 0 0 2.6-2.6V22.8"/></g></svg>
<svg style="left:1985.2px;top:357.9px;" width="32" height="32" viewBox="0 0 32 32"><path d="M16.00 1.00L16.39 1.04L16.78 1.18L17.15 1.40L17.50 1.71L17.83 2.13L18.11 2.69L18.33 3.44L18.33 5.04L18.61 5.11L18.90 5.18L19.18 5.26L19.46 5.35L19.74 5.44L20.01 5.54L20.29 5.65L20.56 5.77L20.82 5.89L21.08 6.02L21.34 6.16L21.60 6.30L21.85 6.45L22.10 6.61L23.23 5.48L23.92 5.09L24.51 4.91L25.04 4.84L25.51 4.86L25.93 4.97L26.30 5.15L26.61 5.39L26.85 5.70L27.03 6.07L27.14 6.49L27.16 6.96L27.09 7.49L26.91 8.08L26.52 8.77L25.39 9.90L25.55 10.15L25.70 10.40L25.84 10.66L25.98 10.92L26.11 11.18L26.23 11.44L26.35 11.71L26.46 11.99L26.56 12.26L26.65 12.54L26.74 12.82L26.82 13.10L26.89 13.39L26.96 13.67L28.56 13.67L29.31 13.89L29.87 14.17L30.29 14.50L30.60 14.85L30.82 15.22L30.96 15.61L31.00 16.00L30.96 16.39L30.82 16.78L30.60 17.15L30.29 17.50L29.87 17.83L29.31 18.11L28.56 18.33L26.96 18.33L26.89 18.61L26.82 18.90L26.74 19.18L26.65 19.46L26.56 19.74L26.46 20.01L26.35 20.29L26.23 20.56L26.11 20.82L25.98 21.08L25.84 21.34L25.70 21.60L25.55 21.85L25.39 22.10L26.52 23.23L26.91 23.92L27.09 24.51L27.16 25.04L27.14 25.51L27.03 25.93L26.85 26.30L26.61 26.61L26.30 26.85L25.93 27.03L25.51 27.14L25.04 27.16L24.51 27.09L23.92 26.91L23.23 26.52L22.10 25.39L21.85 25.55L21.60 25.70L21.34 25.84L21.08 25.98L20.82 26.11L20.56 26.23L20.29 26.35L20.01 26.46L19.74 26.56L19.46 26.65L19.18 26.74L18.90 26.82L18.61 26.89L18.33 26.96L18.33 28.56L18.11 29.31L17.83 29.87L17.50 30.29L17.15 30.60L16.78 30.82L16.39 30.96L16.00 31.00L15.61 30.96L15.22 30.82L14.85 30.60L14.50 30.29L14.17 29.87L13.89 29.31L13.67 28.56L13.67 26.96L13.39 26.89L13.10 26.82L12.82 26.74L12.54 26.65L12.26 26.56L11.99 26.46L11.71 26.35L11.44 26.23L11.18 26.11L10.92 25.98L10.66 25.84L10.40 25.70L10.15 25.55L9.90 25.39L8.77 26.52L8.08 26.91L7.49 27.09L6.96 27.16L6.49 27.14L6.07 27.03L5.70 26.85L5.39 26.61L5.15 26.30L4.97 25.93L4.86 25.51L4.84 25.04L4.91 24.51L5.09 23.92L5.48 23.23L6.61 22.10L6.45 21.85L6.30 21.60L6.16 21.34L6.02 21.08L5.89 20.82L5.77 20.56L5.65 20.29L5.54 20.01L5.44 19.74L5.35 19.46L5.26 19.18L5.18 18.90L5.11 18.61L5.04 18.33L3.44 18.33L2.69 18.11L2.13 17.83L1.71 17.50L1.40 17.15L1.18 16.78L1.04 16.39L1.00 16.00L1.04 15.61L1.18 15.22L1.40 14.85L1.71 14.50L2.13 14.17L2.69 13.89L3.44 13.67L5.04 13.67L5.11 13.39L5.18 13.10L5.26 12.82L5.35 12.54L5.44 12.26L5.54 11.99L5.65 11.71L5.77 11.44L5.89 11.18L6.02 10.92L6.16 10.66L6.30 10.40L6.45 10.15L6.61 9.90L5.48 8.77L5.09 8.08L4.91 7.49L4.84 6.96L4.86 6.49L4.97 6.07L5.15 5.70L5.39 5.39L5.70 5.15L6.07 4.97L6.49 4.86L6.96 4.84L7.49 4.91L8.08 5.09L8.77 5.48L9.90 6.61L10.15 6.45L10.40 6.30L10.66 6.16L10.92 6.02L11.18 5.89L11.44 5.77L11.71 5.65L11.99 5.54L12.26 5.44L12.54 5.35L12.82 5.26L13.10 5.18L13.39 5.11L13.67 5.04L13.67 3.44L13.89 2.69L14.17 2.13L14.50 1.71L14.85 1.40L15.22 1.18L15.61 1.04Z" fill="none" stroke="#222" stroke-width="1.7" stroke-linejoin="round"/><circle cx="16" cy="16" r="5.3" fill="none" stroke="#222" stroke-width="1.7"/></svg>
<div style="left:783px;top:420px;width:1256px;height:2px;background:#e4e8ee"></div>
<span class="t" style="left:806.8px;top:455.06px;font-size:24.5px;color:#111;letter-spacing:1.32px;">Отобрать объекты с популярностью выше</span>
<div style="left:1345px;top:446px;width:80px;height:48px;border:2px solid #c2c2c2"></div>
<span class="t" style="left:1369.8px;top:455.48px;font-size:24px;color:#111;letter-spacing:-0.46px;">0.2</span>
<span class="t" style="left:1433.2px;top:455.48px;font-size:24px;color:#111;transform:scaleX(0.814);transform-origin:0 0;">%</span>
<div style="left:1479px;top:444px;width:107px;height:52px;background:#08afd9;border-radius:6px"></div>
<span class="t" style="left:1493.6px;top:458.38px;font-size:24px;color:#fff;letter-spacing:0.29px;-webkit-text-stroke:0.6px #fff;">Расчет</span>
<span class="t" style="left:1707.5px;top:458.26px;font-size:24.5px;color:#111;font-style:italic;letter-spacing:0.49px;">Отобрано объектов: 172</span>
<div style="left:803px;top:520px;width:1216px;height:2px;background:#e4e8ee"></div>
<span class="t" style="left:806.6px;top:559.26px;font-size:24.5px;color:#111;letter-spacing:1.35px;">Объектов в правилах:</span>
<div style="left:1109px;top:546px;width:42px;height:48px;background:#9fa8b8;border-radius:4px"></div>
<span class="t" style="left:1123.6px;top:558.88px;font-size:24px;color:#fff;">1</span>
<div style="left:1159px;top:546px;width:43px;height:48px;background:#9fa8b8;border-radius:4px"></div>
<span class="t" style="left:1173.2px;top:558.88px;font-size:24px;color:#fff;">2</span>
<div style="left:1210px;top:546px;width:43px;height:48px;background:#5577d5;border-radius:4px"></div>
<span class="t" style="left:1224.5px;top:558.88px;font-size:24px;color:#fff;">3</span>
<div style="left:1261px;top:546px;width:42px;height:48px;background:#5577d5;border-radius:4px"></div>
<span class="t" style="left:1274.3px;top:558.88px;font-size:24px;color:#fff;">4</span>
<div style="left:1311px;top:546px;width:43px;height:48px;background:#5577d5;border-radius:4px"></div>
<span class="t" style="left:1325.7px;top:558.88px;font-size:24px;color:#fff;">5</span>
<div style="left:773px;top:630px;width:1276px;height:2px;background:#dfe4ec"></div>
<div style="left:773px;top:632px;width:1275px;height:60px;background:#f7f8fc"></div>
<span class="t" style="left:803px;top:652.88px;font-size:24px;color:#555a62;letter-spacing:0.07px;">Состав</span>
<span class="t" style="left:1226.7px;top:652.88px;font-size:24px;color:#555a62;letter-spacing:0.53px;">Поддержка</span>
<span class="t" style="left:1509.0px;top:652.88px;font-size:24px;color:#555a62;letter-spacing:0.73px;">Достоверность</span>
<span class="t" style="left:1790.6px;top:652.88px;font-size:24px;color:#555a62;letter-spacing:0.34px;">Лифт</span>
<svg style="left:1449px;top:649.8px;" width="16" height="26" viewBox="0 0 16 26"><g fill="#222" stroke="#222" stroke-width="1.2" stroke-linejoin="round"><path d="M1.3 9.6L7.7 1.1L14.1 9.6Z"/><path d="M1.3 16.2L7.7 24.7L14.1 16.2Z"/></g></svg>
<svg style="left:1731px;top:649.8px;" width="16" height="26" viewBox="0 0 16 26"><g fill="#222" stroke="#222" stroke-width="1.2" stroke-linejoin="round"><path d="M1.3 9.6L7.7 1.1L14.1 9.6Z"/><path d="M1.3 16.2L7.7 24.7L14.1 16.2Z"/></g></svg>
<svg style="left:2019px;top:649.8px;" width="16" height="26" viewBox="0 0 16 26"><g fill="#222" stroke="#222" stroke-width="1.2" stroke-linejoin="round"><path d="M1.3 9.6L7.7 1.1L14.1 9.6Z"/><path d="M1.3 16.2L7.7 24.7L14.1 16.2Z"/></g></svg>
<div style="left:773px;top:692px;width:1275px;height:2px;background:#e4e7ed"></div>
<svg style="left:785.2px;top:716px;" width="18" height="12" viewBox="0 0 18 12"><path d="M0.3 0.5H16.7L8.5 11.4Z" fill="#5878d4"/></svg>
<span class="t" style="left:813.2px;top:710.68px;font-size:24px;color:#555a62;letter-spacing:0.82px;">Компания Интегратор, Газпр...</span>
<span class="t" style="left:1209.0px;top:710.68px;font-size:24px;color:#555a62;letter-spacing:0.21px;">4.28</span>
<span class="t" style="left:1490.4px;top:710.68px;font-size:24px;color:#555a62;letter-spacing:0.47px;">100.00</span>
<span class="t" style="left:1772px;top:710.68px;font-size:24px;color:#555a62;letter-spacing:0.47px;">23.38</span>
<div style="left:773px;top:750px;width:1275px;height:2px;background:#e4e7ed"></div>
<span class="t" style="left:865px;top:770.68px;font-size:24px;color:#555a62;letter-spacing:0.88px;">Газпром Промгаз</span>
<svg style="left:1079.1px;top:777.1px;" width="19" height="10" viewBox="0 0 19 10"><path d="M0 5H14" stroke="#555a62" stroke-width="2"/><path d="M13.2 0.4L19 5L13.2 9.6Z" fill="#555a62"/></svg>
<span class="t" style="left:1107.6px;top:770.68px;font-size:24px;color:#555a62;letter-spacing:0.23px;">Ком...</span>
<span class="t" style="left:1209.0px;top:770.68px;font-size:24px;color:#555a62;letter-spacing:0.21px;">4.28</span>
<span class="t" style="left:1490.4px;top:770.68px;font-size:24px;color:#555a62;letter-spacing:0.47px;">100.00</span>
<span class="t" style="left:1772px;top:770.68px;font-size:24px;color:#555a62;letter-spacing:0.47px;">23.37</span>
<div style="left:773px;top:810px;width:1275px;height:2px;background:#e4e7ed"></div>
<span class="t" style="left:865px;top:830.68px;font-size:24px;color:#555a62;letter-spacing:0.59px;">Всероссиийский дважды ...</span>
<span class="t" style="left:1209.0px;top:830.68px;font-size:24px;color:#555a62;letter-spacing:0.21px;">4.28</span>
<span class="t" style="left:1490.4px;top:830.68px;font-size:24px;color:#555a62;letter-spacing:0.47px;">100.00</span>
<span class="t" style="left:1772px;top:830.68px;font-size:24px;color:#555a62;letter-spacing:0.47px;">23.37</span>
<div style="left:773px;top:870px;width:1275px;height:2px;background:#e4e7ed"></div>
<span class="t" style="left:865px;top:890.68px;font-size:24px;color:#555a62;letter-spacing:0.72px;">Компания Интегратор, В...</span>
<span class="t" style="left:1209.0px;top:890.68px;font-size:24px;color:#555a62;letter-spacing:0.21px;">4.28</span>
<span class="t" style="left:1490.4px;top:890.68px;font-size:24px;color:#555a62;letter-spacing:0.47px;">100.00</span>
<span class="t" style="left:1772px;top:890.68px;font-size:24px;color:#555a62;letter-spacing:0.47px;">23.38</span>
<div style="left:773px;top:930px;width:1275px;height:2px;background:#e4e7ed"></div>
<span class="t" style="left:865px;top:950.68px;font-size:24px;color:#555a62;letter-spacing:0.55px;">Газпром Промгаз, Всерос...</span>
<span class="t" style="left:1209.0px;top:950.68px;font-size:24px;color:#555a62;letter-spacing:0.21px;">4.28</span>
<span class="t" style="left:1490.4px;top:950.68px;font-size:24px;color:#555a62;letter-spacing:0.47px;">100.00</span>
<span class="t" style="left:1772px;top:950.68px;font-size:24px;color:#555a62;letter-spacing:0.47px;">23.38</span>
<div style="left:773px;top:990px;width:1275px;height:2px;background:#e4e7ed"></div>
<svg style="left:787.6px;top:1013.6px;" width="12" height="18" viewBox="0 0 12 18"><path d="M0.4 0.4V16.8L11.6 8.6Z" fill="#555a62"/></svg>
<span class="t" style="left:814.2px;top:1010.68px;font-size:24px;color:#555a62;letter-spacing:0.68px;">Зодчий, Проектно-изыскател...</span>
<span class="t" style="left:1208px;top:1010.68px;font-size:24px;color:#555a62;letter-spacing:0.21px;">2.67</span>
<span class="t" style="left:1491.4px;top:1010.68px;font-size:24px;color:#555a62;letter-spacing:0.47px;">33.33</span>
<span class="t" style="left:1773.0px;top:1010.68px;font-size:24px;color:#555a62;letter-spacing:0.47px;">5.19</span>
<div style="left:773px;top:1050px;width:1275px;height:2px;background:#e4e7ed"></div>
<svg style="left:787.6px;top:1073.6px;" width="12" height="18" viewBox="0 0 12 18"><path d="M0.4 0.4V16.8L11.6 8.6Z" fill="#555a62"/></svg>
<span class="t" style="left:813.2px;top:1070.68px;font-size:24px;color:#555a62;letter-spacing:0.82px;">Компания Интегратор, Газпр...</span>
<span class="t" style="left:1208px;top:1070.68px;font-size:24px;color:#555a62;letter-spacing:0.21px;">2.67</span>
<span class="t" style="left:1490.4px;top:1070.68px;font-size:24px;color:#555a62;letter-spacing:0.47px;">62.50</span>
<span class="t" style="left:1772px;top:1070.68px;font-size:24px;color:#555a62;letter-spacing:0.47px;">23.38</span>
<div style="left:773px;top:1110px;width:1275px;height:2px;background:#e4e7ed"></div>
<svg style="left:787.6px;top:1133.6px;" width="12" height="18" viewBox="0 0 12 18"><path d="M0.4 0.4V16.8L11.6 8.6Z" fill="#555a62"/></svg>
<span class="t" style="left:813.2px;top:1130.68px;font-size:24px;color:#555a62;letter-spacing:0.82px;">Компания Интегратор, Научн...</span>
<span class="t" style="left:1208px;top:1130.68px;font-size:24px;color:#555a62;letter-spacing:0.21px;">2.67</span>
<span class="t" style="left:1490.4px;top:1130.68px;font-size:24px;color:#555a62;letter-spacing:0.47px;">100.00</span>
<span class="t" style="left:1772px;top:1130.68px;font-size:24px;color:#555a62;letter-spacing:0.47px;">23.38</span>
<div style="left:773px;top:1170px;width:1275px;height:2px;background:#e4e7ed"></div>
<svg style="left:787.6px;top:1193.6px;" width="12" height="18" viewBox="0 0 12 18"><path d="M0.4 0.4V16.8L11.6 8.6Z" fill="#555a62"/></svg>
<span class="t" style="left:813.2px;top:1190.68px;font-size:24px;color:#555a62;letter-spacing:0.83px;">Газпром Промгаз, Научно-ин...</span>
<span class="t" style="left:1208px;top:1190.68px;font-size:24px;color:#555a62;letter-spacing:0.21px;">2.67</span>
<span class="t" style="left:1490.4px;top:1190.68px;font-size:24px;color:#555a62;letter-spacing:0.47px;">100.00</span>
<span class="t" style="left:1772px;top:1190.68px;font-size:24px;color:#555a62;letter-spacing:0.47px;">23.38</span>
<div style="left:773px;top:1230px;width:1275px;height:2px;background:#e4e7ed"></div>
<svg style="left:787.6px;top:1253.6px;" width="12" height="18" viewBox="0 0 12 18"><path d="M0.4 0.4V16.8L11.6 8.6Z" fill="#555a62"/></svg>
<span class="t" style="left:814.2px;top:1250.68px;font-size:24px;color:#555a62;letter-spacing:0.69px;">Зодчий, Проектный институт ...</span>
<span class="t" style="left:1208px;top:1250.68px;font-size:24px;color:#555a62;letter-spacing:0.21px;">2.67</span>
<span class="t" style="left:1491.4px;top:1250.68px;font-size:24px;color:#555a62;letter-spacing:0.47px;">31.25</span>
<span class="t" style="left:1773.0px;top:1250.68px;font-size:24px;color:#555a62;letter-spacing:0.47px;">3.25</span>
<div style="left:773px;top:1290px;width:1275px;height:2px;background:#e4e7ed"></div>
<svg style="left:787.6px;top:1313.6px;" width="12" height="18" viewBox="0 0 12 18"><path d="M0.4 0.4V16.8L11.6 8.6Z" fill="#555a62"/></svg>
<span class="t" style="left:813.2px;top:1310.68px;font-size:24px;color:#555a62;letter-spacing:0.82px;">Компания Интегратор, Газпр...</span>
<span class="t" style="left:1208px;top:1310.68px;font-size:24px;color:#555a62;letter-spacing:0.21px;">2.67</span>
<span class="t" style="left:1490.4px;top:1310.68px;font-size:24px;color:#555a62;letter-spacing:0.47px;">100.00</span>
<span class="t" style="left:1772px;top:1310.68px;font-size:24px;color:#555a62;letter-spacing:0.47px;">23.38</span>
<div style="left:1195px;top:632px;width:2px;height:716px;background:#e4e7ed"></div>
<div style="left:1477px;top:632px;width:2px;height:716px;background:#e4e7ed"></div>
<div style="left:1759px;top:632px;width:2px;height:716px;background:#e4e7ed"></div>
<div style="left:2039px;top:692px;width:7px;height:210px;background:#c9ccd2"></div>
</div></div>
<svg style="left:1647px;top:280.3px;" width="26" height="38" viewBox="0 0 26 38"><path d="M3.2 4.6V27.2L8.3 22.9L13.4 32.6L17 31.2L12.4 20.9L19.3 20.4Z" fill="#000" stroke="#fff" stroke-width="4" stroke-linejoin="miter" paint-order="stroke"/><path d="M3.2 4.6V27.2L8.3 22.9L13.4 32.6L17 31.2L12.4 20.9L19.3 20.4Z" fill="#000"/></svg>
</div>
</body></html>
